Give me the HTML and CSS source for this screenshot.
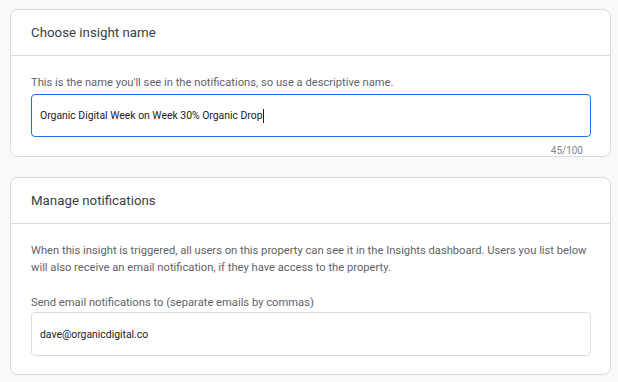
FILE: index.html
```html
<!DOCTYPE html>
<html lang="en">
<head>
    <meta charset="UTF-8">
    <meta name="viewport" content="width=device-width, initial-scale=1.0">
    <title>Insight settings</title>
    <link rel="stylesheet" href="styles.css">
</head>
<body>
    <div class="page">
        <section class="card">
            <div class="card-header">Choose insight name</div>
            <div class="card-body name-body">
                <label class="field-label" for="name">This is the name you'll see in the notifications, so use a descriptive name.</label>
                <div class="input focused" id="name">Organic Digital Week on Week 30% Organic Drop<span class="caret"></span></div>
                <div class="counter">45/100</div>
            </div>
        </section>

        <section class="card">
            <div class="card-header">Manage notifications</div>
            <div class="card-body">
                <p class="desc">When this insight is triggered, all users on this property can see it in the Insights dashboard. Users you list below will also receive an email notification, if they have access to the property.</p>
                <label class="field-label email-label" for="emails">Send email notifications to (separate emails by commas)</label>
                <div class="input" id="emails">dave@organicdigital.co</div>
            </div>
        </section>
    </div>
</body>
</html>
```

FILE: styles.css
```css
body {
    font-family: Roboto, "Liberation Sans", Arial, sans-serif;
    background-color: #f8f9fa;
    margin: 0;
    padding: 0;
}

.page {
    padding: 9px 7px 0 10px;
    display: flex;
    flex-direction: column;
    gap: 20px;
}

.card {
    background-color: #fff;
    border: 1px solid #dadce0;
    border-radius: 8px;
}

.card-header {
    height: 45px;
    padding: 0 20px;
    display: flex;
    align-items: center;
    font-size: 13.3px;
    color: #3c4043;
    border-bottom: 1px solid #dadce0;
}

.card-body {
    padding: 18px 19px 18px 20px;
}

.name-body {
    padding-top: 19px;
    padding-bottom: 0;
}

.field-label {
    display: block;
    font-size: 11.2px;
    line-height: 15px;
    color: #5f6368;
    margin-bottom: 4px;
}

.email-label {
    margin-bottom: 2px;
}

.desc {
    margin: 0 0 19px;
    font-size: 11.2px;
    line-height: 17px;
    color: #5f6368;
}

.input {
    height: 42px;
    border: 1px solid #dadce0;
    border-radius: 4px;
    padding: 0 8px;
    display: flex;
    align-items: center;
    font-size: 10.4px;
    color: #202124;
}

.input.focused {
    height: 41px;
    border-color: #1a73e8;
}

.caret {
    display: inline-block;
    width: 1px;
    height: 14px;
    background-color: #202124;
}

.counter {
    text-align: right;
    font-size: 10px;
    line-height: 10px;
    color: #80868b;
    padding: 9px 8px 0 0;
}
```
